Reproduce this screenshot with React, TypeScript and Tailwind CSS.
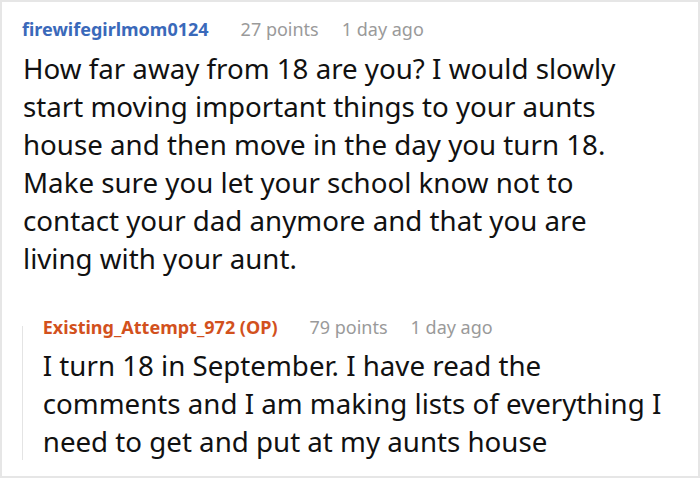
export default function App() {
  return (
    <div
      className="h-[478px] w-[700px] overflow-hidden border-2 border-[#e6e6e6] bg-white"
      style={{ fontFamily: '"Noto Sans", "Open Sans", sans-serif' }}
    >
      <div className="pl-[20px] pr-[34px] pt-[14px]">
        <Meta name="firewifegirlmom0124" color="text-[#3a69ba]" points="27 points" time="1 day ago" />
        <p className="mt-[7px] pl-[1px] pr-[6px] text-[27.7px] leading-[38px] text-[#111]">
          How far away from 18 are you? I would slowly start moving important things to your aunts
          house and then move in the day you turn 18. Make sure you let your school know not to
          contact your dad anymore and that you are living with your aunt.
        </p>

        <div className="mt-[37px] flex">
          <div className="mt-[12px] w-[2px] bg-[#e4e4e4]" />
          <div className="pl-[20px]">
            <Meta
              name="Existing_Attempt_972 (OP)"
              color="text-[#d2511d]"
              points="79 points"
              time="1 day ago"
            />
            <p className="mt-[6px] text-[27.7px] leading-[38px] text-[#111]">
              I turn 18 in September. I have read the comments and I am making lists of everything I
              need to get and put at my aunts house
            </p>
          </div>
        </div>
      </div>
    </div>
  )
}

function Meta({
  name,
  color,
  points,
  time,
}: {
  name: string
  color: string
  points: string
  time: string
}) {
  return (
    <div className="flex items-baseline gap-[32px] text-[18px] leading-[26px]">
      <span className={`font-bold ${color}`}>{name}</span>
      <span className="flex gap-[23px] text-[#9a9a9a]">
        <span>{points}</span>
        <span>{time}</span>
      </span>
    </div>
  )
}
